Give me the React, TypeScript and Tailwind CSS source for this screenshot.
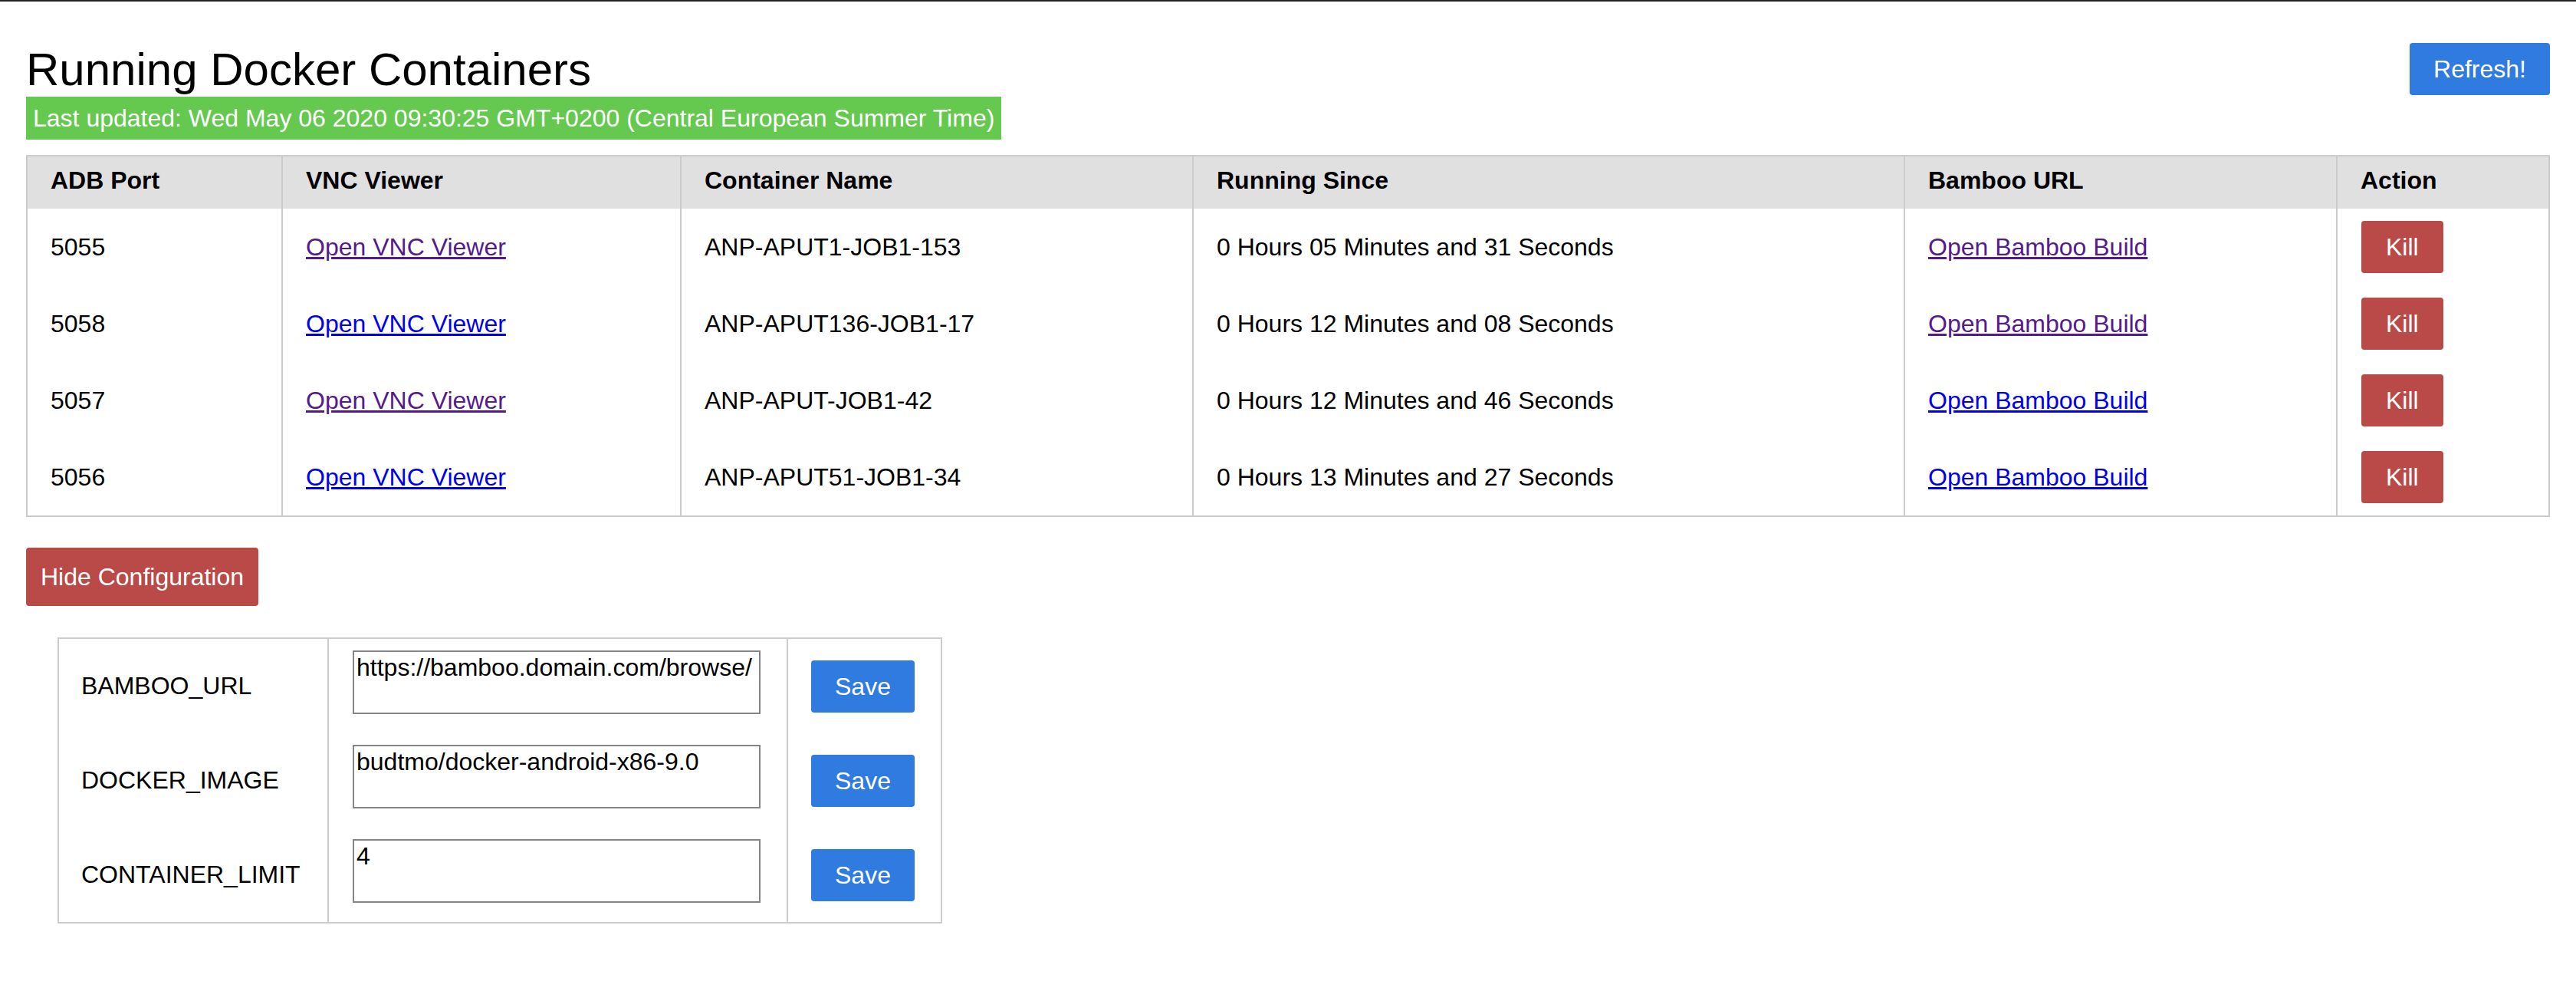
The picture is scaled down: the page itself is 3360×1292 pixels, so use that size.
import { useState } from "react";

interface Container {
  port: number;
  name: string;
  runningSince: string;
  vncVisited: boolean;
  bambooVisited: boolean;
}

const CONTAINERS: Container[] = [
  { port: 5055, name: "ANP-APUT1-JOB1-153", runningSince: "0 Hours 05 Minutes and 31 Seconds", vncVisited: true, bambooVisited: true },
  { port: 5058, name: "ANP-APUT136-JOB1-17", runningSince: "0 Hours 12 Minutes and 08 Seconds", vncVisited: false, bambooVisited: true },
  { port: 5057, name: "ANP-APUT-JOB1-42", runningSince: "0 Hours 12 Minutes and 46 Seconds", vncVisited: true, bambooVisited: false },
  { port: 5056, name: "ANP-APUT51-JOB1-34", runningSince: "0 Hours 13 Minutes and 27 Seconds", vncVisited: false, bambooVisited: false },
];

const CONFIG = [
  { key: "BAMBOO_URL", value: "https://bamboo.domain.com/browse/" },
  { key: "DOCKER_IMAGE", value: "budtmo/docker-android-x86-9.0" },
  { key: "CONTAINER_LIMIT", value: "4" },
];

const HEADERS = ["ADB Port", "VNC Viewer", "Container Name", "Running Since", "Bamboo URL", "Action"];

const App = () => {
  const [showConfig, setShowConfig] = useState(true);

  const linkClass = (visited: boolean) =>
    visited ? "text-[#551a8b] underline" : "text-[#0000ee] underline";

  return (
    <div className="min-h-screen bg-white font-['Liberation_Sans',Arial,sans-serif] text-[32px] text-black">
      <div className="h-[2px] bg-[#222]" />

      <div className="px-[34px] pt-[54px]">
        {/* Header */}
        <div className="flex items-start justify-between">
          <div>
            <h1 className="mt-[5px] text-[60px] leading-[60px] font-normal">Running Docker Containers</h1>
            <div className="mt-[5px] inline-block bg-[#65c84f] px-[9px] py-[9px] leading-[38px] text-white">
              Last updated: Wed May 06 2020 09:30:25 GMT+0200 (Central European Summer Time)
            </div>
          </div>
          <button className="rounded-[4px] bg-[#2f7be0] px-[31px] py-[16px] leading-[36px] text-white">Refresh!</button>
        </div>

        {/* Containers */}
        <div className="mt-[20px] grid grid-cols-[331px_520px_668px_928px_564px_277px] border-2 border-[#ccc]">
          {HEADERS.map((h, i) => (
            <div
              key={h}
              className={`flex h-[68px] items-start bg-[#e0e0e0] pl-[30px] pt-[13px] font-bold leading-[37px] ${i > 0 ? "border-l-2 border-[#ccc]" : ""}`}
            >
              {h}
            </div>
          ))}
          {CONTAINERS.map((c) => (
            <div key={c.port} className="contents">
              <div className="flex h-[100px] items-center pl-[30px]">{c.port}</div>
              <div className="flex items-center border-l-2 border-[#ccc] pl-[30px]">
                <a href="#" className={linkClass(c.vncVisited)}>Open VNC Viewer</a>
              </div>
              <div className="flex items-center border-l-2 border-[#ccc] pl-[30px]">{c.name}</div>
              <div className="flex items-center border-l-2 border-[#ccc] pl-[30px]">{c.runningSince}</div>
              <div className="flex items-center border-l-2 border-[#ccc] pl-[30px]">
                <a href="#" className={linkClass(c.bambooVisited)}>Open Bamboo Build</a>
              </div>
              <div className="flex items-center border-l-2 border-[#ccc] pl-[31px]">
                <button className="rounded-[4px] bg-[#b94a48] px-[32px] py-[16px] leading-[36px] text-white">Kill</button>
              </div>
            </div>
          ))}
        </div>

        {/* Configuration */}
        <button
          onClick={() => setShowConfig(!showConfig)}
          className="mt-[40px] rounded-[4px] bg-[#b94a48] px-[19px] py-[20px] leading-[36px] text-white"
        >
          {showConfig ? "Hide Configuration" : "Show Configuration"}
        </button>

        {showConfig && (
          <div className="ml-[41px] mt-[41px] grid w-[1154px] grid-cols-[350px_599px_201px] border-2 border-[#ccc]">
            {CONFIG.map((row) => (
              <div key={row.key} className="contents">
                <div className="flex h-[123px] items-center pl-[29px] leading-[37px]">{row.key}</div>
                <div className="border-l-2 border-[#ccc] pl-[31px] pt-[15px]">
                  <textarea
                    readOnly
                    defaultValue={row.value}
                    className="block h-[83px] w-[532px] resize-none overflow-hidden border-2 border-[#858585] px-[3px] py-[2px] font-['Liberation_Sans',Arial,sans-serif] text-[32px] leading-[37px] text-black outline-none"
                  />
                </div>
                <div className="flex items-center border-l-2 border-[#ccc] pl-[30px]">
                  <button className="rounded-[4px] bg-[#2f7be0] px-[31px] py-[16px] leading-[36px] text-white">Save</button>
                </div>
              </div>
            ))}
          </div>
        )}
      </div>
    </div>
  );
};

export default App;
